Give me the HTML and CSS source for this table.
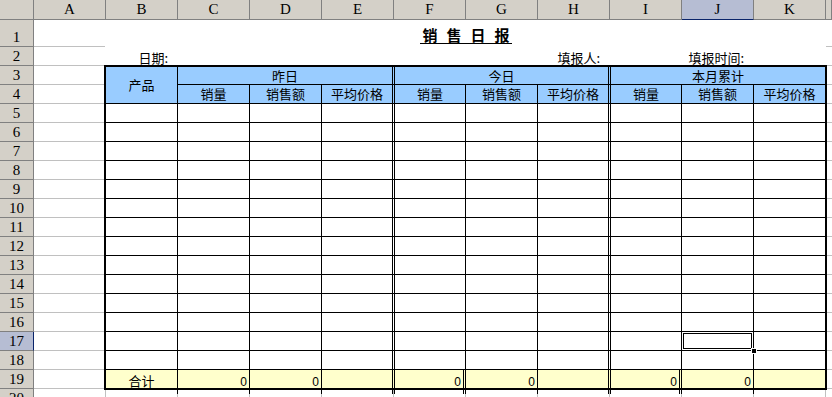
FILE: index.html
```html
<!DOCTYPE html>
<html lang="zh-CN">
<head>
  <meta charset="UTF-8">
  <title>销售日报</title>
  <link rel="stylesheet" href="styles.css">
</head>
<body>
  <div class="col-heads">
    <div class="corner"></div>
    <div class="col-head">A</div>
    <div class="col-head">B</div>
    <div class="col-head">C</div>
    <div class="col-head">D</div>
    <div class="col-head">E</div>
    <div class="col-head">F</div>
    <div class="col-head">G</div>
    <div class="col-head">H</div>
    <div class="col-head">I</div>
    <div class="col-head active">J</div>
    <div class="col-head">K</div>
    <div class="col-head rest"></div>
  </div>

  <div class="sheet">
    <div class="row-heads">
      <div class="row-head tall">1</div>
      <div class="row-head">2</div>
      <div class="row-head">3</div>
      <div class="row-head">4</div>
      <div class="row-head">5</div>
      <div class="row-head">6</div>
      <div class="row-head">7</div>
      <div class="row-head">8</div>
      <div class="row-head">9</div>
      <div class="row-head">10</div>
      <div class="row-head">11</div>
      <div class="row-head">12</div>
      <div class="row-head">13</div>
      <div class="row-head">14</div>
      <div class="row-head">15</div>
      <div class="row-head">16</div>
      <div class="row-head active">17</div>
      <div class="row-head">18</div>
      <div class="row-head">19</div>
      <div class="row-head">20</div>
    </div>

    <div class="cells">
      <div class="banner">
        <h1 class="title"><span>销</span><span>售</span><span>日</span><span>报</span></h1>
        <div class="label date">日期:</div>
        <div class="label reporter">填报人:</div>
        <div class="label time">填报时间:</div>
      </div>

      <div class="report">
        <div class="thead">
          <div class="product">产品</div>
          <div class="group">昨日</div>
          <div class="group">今日</div>
          <div class="group last">本月累计</div>
          <div>销量</div><div>销售额</div><div class="group-end">平均价格</div>
          <div>销量</div><div>销售额</div><div class="group-end">平均价格</div>
          <div>销量</div><div>销售额</div><div class="last">平均价格</div>
        </div>

        <div class="tr"><div></div><div></div><div></div><div></div><div></div><div></div><div></div><div></div><div></div><div></div></div>
        <div class="tr"><div></div><div></div><div></div><div></div><div></div><div></div><div></div><div></div><div></div><div></div></div>
        <div class="tr"><div></div><div></div><div></div><div></div><div></div><div></div><div></div><div></div><div></div><div></div></div>
        <div class="tr"><div></div><div></div><div></div><div></div><div></div><div></div><div></div><div></div><div></div><div></div></div>
        <div class="tr"><div></div><div></div><div></div><div></div><div></div><div></div><div></div><div></div><div></div><div></div></div>
        <div class="tr"><div></div><div></div><div></div><div></div><div></div><div></div><div></div><div></div><div></div><div></div></div>
        <div class="tr"><div></div><div></div><div></div><div></div><div></div><div></div><div></div><div></div><div></div><div></div></div>
        <div class="tr"><div></div><div></div><div></div><div></div><div></div><div></div><div></div><div></div><div></div><div></div></div>
        <div class="tr"><div></div><div></div><div></div><div></div><div></div><div></div><div></div><div></div><div></div><div></div></div>
        <div class="tr"><div></div><div></div><div></div><div></div><div></div><div></div><div></div><div></div><div></div><div></div></div>
        <div class="tr"><div></div><div></div><div></div><div></div><div></div><div></div><div></div><div></div><div></div><div></div></div>
        <div class="tr"><div></div><div></div><div></div><div></div><div></div><div></div><div></div><div></div><div></div><div></div></div>
        <div class="tr"><div></div><div></div><div></div><div></div><div></div><div></div><div></div><div></div><div class="selected"><span class="cursor"><i class="handle"></i></span></div><div></div></div>
        <div class="tr"><div></div><div></div><div></div><div></div><div></div><div></div><div></div><div></div><div></div><div></div></div>

        <div class="tr total">
          <div class="caption">合计</div>
          <div class="num">0</div>
          <div class="num">0</div>
          <div></div>
          <div class="num">0</div>
          <div class="num">0</div>
          <div></div>
          <div class="num">0</div>
          <div class="num">0</div>
          <div></div>
        </div>
      </div>
    </div>
  </div>
</body>
</html>
```

FILE: styles.css
```css
* {
  box-sizing: border-box;
}

body {
  margin: 0;
  height: 100vh;
  overflow: hidden;
  background: #fff;
  color: #000;
  font-family: "Noto Sans CJK SC", sans-serif;
  font-size: 13px;
}

/* column letters */
.col-heads {
  display: flex;
  height: 20px;
  font-family: "Liberation Serif", serif;
  font-size: 15px;
}

.corner,
.col-head {
  flex: none;
  background: #d4d0c8;
  border-right: 1px solid #808080;
  border-bottom: 1px solid #808080;
}

.corner {
  width: 34px;
}

.col-head {
  width: 72px;
  display: flex;
  align-items: center;
  justify-content: center;
  line-height: 19px;
}

.col-head.active {
  background: #b6bdd3;
  border-bottom-color: #0a246a;
}

.col-head.rest {
  flex: 1;
}

/* row numbers + cell area */
.sheet {
  display: flex;
  height: calc(100% - 20px);
}

.row-heads {
  flex: none;
  width: 34px;
  background: #d4d0c8;
  font-family: "Liberation Serif", serif;
  font-size: 15px;
}

.row-head {
  height: 19px;
  display: flex;
  align-items: flex-end;
  justify-content: center;
  line-height: 17px;
  border-right: 1px solid #808080;
  border-bottom: 1px solid #808080;
}

.row-head.tall {
  height: 27px;
}

.row-head.active {
  background: #b6bdd3;
  border-right-color: #0a246a;
}

.cells {
  flex: 1;
  display: grid;
  grid-template-columns: repeat(11, 72px) 1fr;
  grid-template-rows: 27px 19px repeat(17, 19px) 1fr;
  background:
    repeating-linear-gradient(to right, transparent 0 71px, #c0c0c0 71px 72px),
    linear-gradient(#c0c0c0, #c0c0c0) 0 26px / 100% 1px no-repeat,
    repeating-linear-gradient(to bottom, transparent 0 18px, #c0c0c0 18px 19px) 0 27px / 100% 100% no-repeat;
}

/* title block over B1:K2 */
.banner {
  grid-column: 2 / 12;
  grid-row: 1 / 3;
  margin-left: -1px;
  padding-left: 1px;
  background: #fff;
  display: grid;
  grid-template-columns: repeat(10, 72px);
  grid-template-rows: 27px 19px;
}

.title {
  grid-column: 1 / -1;
  justify-self: center;
  align-self: end;
  display: flex;
  gap: 9px;
  margin: 0 0 3px;
  padding: 0 2px 1px;
  border-bottom: 1px solid #000;
  font-size: 15px;
  font-weight: 700;
  line-height: 15px;
}

.label {
  grid-row: 2;
  display: flex;
  align-items: flex-end;
  justify-content: flex-end;
  padding-right: 10px;
  line-height: 16px;
  white-space: nowrap;
}

.date {
  grid-column: 1;
}

.reporter {
  grid-column: 7;
}

.time {
  grid-column: 9;
}

/* the report table over B3:K19 */
.report {
  grid-column: 2 / 12;
  grid-row: 3 / 20;
  margin: -1px -1px -1px -2px;
  border: 2px solid #000;
  display: flex;
  flex-direction: column;
  background: #fff;
}

.thead,
.tr {
  display: grid;
  grid-template-columns: 72px 72px 72px 73px 71px 72px 73px 71px 72px 71px;
}

.thead {
  grid-template-rows: 18px 19px;
  background: #99ccff;
}

.thead > div {
  display: flex;
  align-items: center;
  justify-content: center;
  border-right: 1px solid #000;
  border-bottom: 1px solid #000;
  line-height: 16px;
}

.thead .product {
  grid-row: span 2;
}

.thead .group {
  grid-column: span 3;
}

.thead .group,
.thead .group-end {
  border-right: 3px double #000;
}

.thead .last {
  border-right: 0;
}

.tr {
  height: 19px;
}

.tr > div {
  border-right: 1px solid #000;
  border-bottom: 1px solid #000;
}

.tr > div:nth-child(4),
.tr > div:nth-child(7) {
  border-right: 3px double #000;
}

.tr > div:last-child {
  border-right: 0;
}

.tr.total {
  height: 18px;
  background: #ffffcc;
}

.tr.total > div {
  border-bottom: 0;
}

.tr.total > div:nth-child(5),
.tr.total > div:nth-child(8) {
  border-right: 3px double #000;
}

.caption {
  text-align: center;
  line-height: 22px;
}

.num {
  padding-right: 2px;
  text-align: right;
  font-family: "Liberation Sans", sans-serif;
  font-size: 12px;
  line-height: 24px;
}

/* active cell frame with fill handle */
.selected {
  position: relative;
}

.cursor {
  position: absolute;
  top: -1px;
  left: -1px;
  right: -1px;
  bottom: -1px;
  border: 1px solid #000;
  box-shadow: inset 0 0 0 1px #fff, inset 0 0 0 2px #000;
}

.handle {
  position: absolute;
  right: -4px;
  bottom: -4px;
  width: 6px;
  height: 6px;
  background: #000;
  border: 1px solid #fff;
}
```
